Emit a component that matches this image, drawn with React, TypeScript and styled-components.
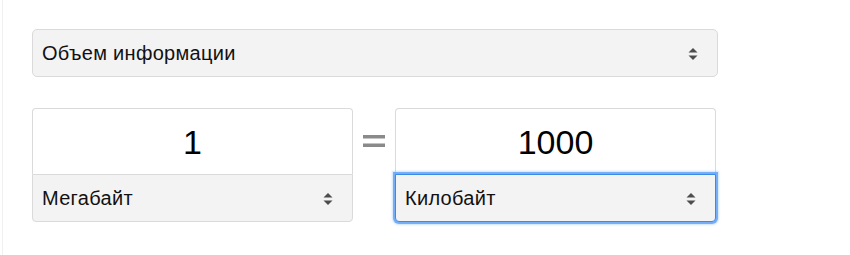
import styled, {createGlobalStyle} from 'styled-components';

const GlobalStyle = createGlobalStyle`
  html, body {
    margin: 0;
    padding: 0;
    background: #ffffff;
  }
  body {
    font-family: "Liberation Sans", Arial, sans-serif;
    color: #111111;
  }
`;

const Page = styled.div`
  height: 255px;
  margin-left: 2px;
  border-left: 1px solid #f0f0f0;
  padding: 29px 0 0 29px;
  box-sizing: border-box;
`;

const SelectBox = styled.div<{$focused?: boolean; $flat?: boolean}>`
  height: 48px;
  box-sizing: border-box;
  display: flex;
  align-items: center;
  justify-content: space-between;
  padding: 1px 19px 0 9px;
  background: #f3f3f3;
  border: 1px solid ${p => (p.$focused ? '#3d8ae6' : '#dadada')};
  border-radius: ${p => (p.$flat ? '0 0 4px 4px' : '5px')};
  box-shadow: ${p => (p.$focused ? '0 0 0 2px rgba(95, 160, 245, 0.8), 0 0 2px 3px rgba(95, 160, 245, 0.3)' : 'none')};
  font-size: 20px;
  letter-spacing: 0.3px;
  color: #111111;
`;

const TopSelect = styled(SelectBox)`
  width: 686px;
`;

const ConverterRow = styled.div`
  display: flex;
  align-items: flex-start;
  margin-top: 31px;
`;

const UnitCard = styled.div`
  width: 321px;
  display: flex;
  flex-direction: column;
`;

const ValueField = styled.div`
  height: 66px;
  box-sizing: border-box;
  border: 1px solid #dadada;
  border-bottom: none;
  border-radius: 4px 4px 0 0;
  background: #ffffff;
  display: flex;
  align-items: center;
  justify-content: center;
  font-size: 34px;
  color: #000000;
  padding-top: 2px;
`;

const EqualsSign = styled.div`
  width: 42px;
  height: 66px;
  display: flex;
  align-items: center;
  justify-content: center;
`;

const Arrows = () => (
  <svg width="10" height="14" viewBox="0 0 10 14">
    <path d="M5 1 L9.5 5.5 L0.5 5.5 Z" fill="#4d4d4d" />
    <path d="M5 13 L9.5 8.5 L0.5 8.5 Z" fill="#4d4d4d" />
  </svg>
);

const Equals = () => (
  <svg width="22" height="14" viewBox="0 0 22 14">
    <rect x="0" y="1" width="22" height="3.5" fill="#8a8a8a" />
    <rect x="0" y="9.5" width="22" height="3.5" fill="#8a8a8a" />
  </svg>
);

export default function App() {
  return (
    <>
      <GlobalStyle />
      <Page>
        <TopSelect>
          <span>Объем информации</span>
          <Arrows />
        </TopSelect>
        <ConverterRow>
          <UnitCard>
            <ValueField>1</ValueField>
            <SelectBox $flat>
              <span>Мегабайт</span>
              <Arrows />
            </SelectBox>
          </UnitCard>
          <EqualsSign>
            <Equals />
          </EqualsSign>
          <UnitCard>
            <ValueField>1000</ValueField>
            <SelectBox $flat $focused>
              <span>Килобайт</span>
              <Arrows />
            </SelectBox>
          </UnitCard>
        </ConverterRow>
      </Page>
    </>
  );
}
